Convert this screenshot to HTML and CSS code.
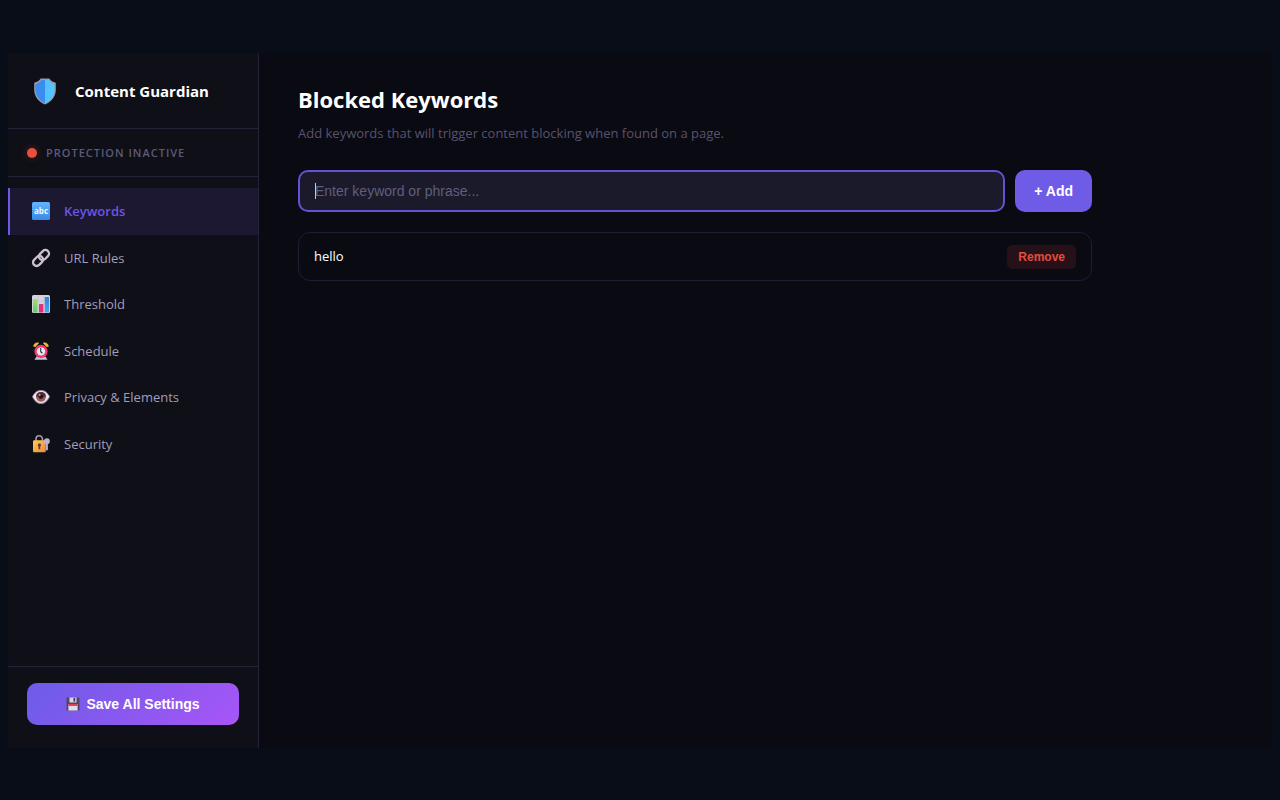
FILE: index.html
```html
<!DOCTYPE html>
<html lang="en">
<head>
<meta charset="utf-8">
<meta name="viewport" content="width=device-width, initial-scale=1">
<title>Content Guardian</title>
<link rel="stylesheet" href="styles.css">
</head>
<body>
<div class="app">
  <aside class="sidebar">
    <div class="brand">
      <svg class="brand-icon" viewBox="0 0 24 28" aria-hidden="true">
        <path d="M12 .5H7.500C6 3 4 4 .8 5v7.500C.8 19.500 6 25.500 12 27.500 18 25.500 23.200 19.500 23.200 12.500V5C20 4 18 3 16.500.500z" fill="#9a9aac"/>
        <path d="M12 2H8.300C6.800 4.200 5 5.400 2.200 6.200v6.300C2.200 18.700 6.800 24 12 26z" fill="#3b8cf0"/>
        <path d="M12 2h3.700c1.500 2.200 3.300 3.400 6.100 4.200v6.300C21.800 18.700 17.200 24 12 26z" fill="#53c4ff"/>
      </svg>
      <span class="brand-name">Content Guardian</span>
    </div>
    <div class="status"><span class="status-dot"></span><span>PROTECTION INACTIVE</span></div>
    <nav class="nav">
      <a class="nav-item active" href="#keywords" aria-current="page">
        <svg class="nav-icon" viewBox="0 0 18 18" aria-hidden="true">
          <defs><linearGradient id="abc" x1="0" y1="0" x2="0" y2="1"><stop offset="0" stop-color="#61b5fc"/><stop offset="1" stop-color="#3988e6"/></linearGradient></defs>
          <rect width="18" height="18" rx="1.500" fill="url(#abc)"/>
          <text x="9" y="11.500" text-anchor="middle" class="abc">abc</text>
        </svg>
        <span>Keywords</span>
      </a>
      <a class="nav-item" href="#url-rules">
        <svg class="nav-icon" viewBox="0 0 18 18" aria-hidden="true">
          <g fill="none" stroke="#cbbfd0" stroke-width="2.300" transform="rotate(-45 9 9)">
            <rect x="-.8" y="5.400" width="11.200" height="7.200" rx="3.600"/>
            <rect x="7.600" y="5.400" width="11.200" height="7.200" rx="3.600"/>
          </g>
        </svg>
        <span>URL Rules</span>
      </a>
      <a class="nav-item" href="#threshold">
        <svg class="nav-icon" viewBox="0 0 18 18" aria-hidden="true">
          <defs>
            <linearGradient id="bar1" x1="0" y1="0" x2="0" y2="1"><stop offset="0" stop-color="#a5dd60"/><stop offset="1" stop-color="#55cf69"/></linearGradient>
            <linearGradient id="bar3" x1="0" y1="0" x2="0" y2="1"><stop offset="0" stop-color="#2787cf"/><stop offset="1" stop-color="#48a5f4"/></linearGradient>
          </defs>
          <rect width="18" height="18" rx="1.500" fill="#d9d1df"/>
          <path d="M0 6h18M0 12h18M6 0v18M12 0v18" stroke="#bdb3c9" stroke-width=".5"/>
          <rect x="1" y="4" width="4.300" height="13.500" rx=".6" fill="url(#bar1)"/>
          <rect x="7" y="9" width="4.300" height="8.500" rx=".6" fill="#e62f76"/>
          <rect x="12.800" y="2" width="4.200" height="15.500" rx=".6" fill="url(#bar3)"/>
        </svg>
        <span>Threshold</span>
      </a>
      <a class="nav-item" href="#schedule">
        <svg class="nav-icon" viewBox="0 0 18 18" aria-hidden="true">
          <path d="M1.200 4.600C1.400 1.800 4.300-.4 7.100.900L3.400 4.900zM16.800 4.600C16.600 1.800 13.700-.4 10.900.900l3.700 4z" fill="#f3b838"/>
          <path d="M4.500 14.500h9l2 3.200H2.500z" fill="#cbbde0"/>
          <circle cx="9" cy="9.400" r="6.600" fill="#f03b68"/>
          <circle cx="9" cy="9.400" r="4.200" fill="#eee6f4"/>
          <path d="M8.700 6v3.700l1.700 1.600" fill="none" stroke="#48344f" stroke-width="1.200"/>
        </svg>
        <span>Schedule</span>
      </a>
      <a class="nav-item" href="#privacy">
        <svg class="nav-icon" viewBox="0 0 18 18" aria-hidden="true">
          <path d="M0 8.700C2.600 3.900 5.300 2 9 2s6.400 1.900 9 6.700C15.400 13.800 12.700 16 9 16S2.600 13.800 0 8.700z" fill="#94869c"/>
          <path d="M.8 8.600C3 4.800 5.700 3.100 9 3.100s6 1.700 8.200 5.500C15 12.900 12.300 15 9 15S3 12.900.8 8.600z" fill="#eee9f0"/>
          <circle cx="9" cy="8.800" r="4.900" fill="#9a5a54"/>
          <path d="M4.100 8.800a4.900 4.900 0 0 1 9.800 0z" fill="#5b2c38"/>
          <circle cx="9" cy="8.600" r="2.300" fill="#24161e"/>
          <circle cx="7.700" cy="7" r="1" fill="#baa1aa"/>
        </svg>
        <span>Privacy &amp; Elements</span>
      </a>
      <a class="nav-item" href="#security">
        <svg class="nav-icon" viewBox="0 0 18 18" aria-hidden="true">
          <defs><linearGradient id="lock" x1="0" y1="0" x2="1" y2="1"><stop offset="0" stop-color="#ffcb48"/><stop offset="1" stop-color="#ed8744"/></linearGradient></defs>
          <path d="M4 6.500V4a3.200 3.200 0 0 1 6.400 0v2.500" fill="none" stroke="#a29aaa" stroke-width="1.600"/>
          <rect x="1" y="5.300" width="12.800" height="12" rx="1.200" fill="url(#lock)"/>
          <path d="M7.400 8.600a1.600 1.600 0 0 1 .8 3v2.600H6.600v-2.600a1.600 1.600 0 0 1 .8-3z" fill="#503943"/>
          <circle cx="14.900" cy="6.200" r="2.900" fill="#bcb0cc"/>
          <path d="M14 8h1.900v6.500l-1 1.200-.9-1z" fill="#bcb0cc"/>
        </svg>
        <span>Security</span>
      </a>
    </nav>
    <div class="sidebar-foot">
      <button class="save" type="button">
        <svg class="save-icon" viewBox="0 0 14 14" aria-hidden="true">
          <path d="M1.200.5h11.600l.7.700v12.300H.5V1.200z" fill="#50466a"/>
          <rect x="3.500" y=".5" width="7" height="5" fill="#d9d5e4"/>
          <rect x="7.500" y="1" width="1.700" height="3.600" fill="#41365a"/>
          <rect x="2.400" y="7" width="9.200" height="6.500" fill="#e3dcea"/>
          <rect x="2.400" y="7" width="9.200" height="2" fill="#dc425e"/>
        </svg>
        <span>Save All Settings</span>
      </button>
    </div>
  </aside>
  <main class="main">
    <div class="content">
      <h1 class="title">Blocked Keywords</h1>
      <p class="subtitle">Add keywords that will trigger content blocking when found on a page.</p>
      <form class="add-form">
        <div class="field-wrap">
          <input class="field" type="text" placeholder="Enter keyword or phrase..." aria-label="Keyword or phrase">
        </div>
        <button class="add" type="button">+ Add</button>
      </form>
      <ul class="list">
        <li class="list-item"><span>hello</span><button class="remove" type="button">Remove</button></li>
      </ul>
    </div>
  </main>
</div>
</body>
</html>
```
FILE: styles.css
```css
* { box-sizing: border-box; }

body {
  margin: 0;
  min-height: 100vh;
  padding: 53px 8px 52px;
  display: flex;
  background: #080d18;
  color: #fff;
  font: 13px/1.5 "Open Sans", "Noto Sans", sans-serif;
}

button, input { font-family: "Liberation Sans", Arial, sans-serif; }
button { border: 0; font-weight: 700; cursor: pointer; }

.app { flex: 1; display: flex; background: #0a0a12; }

.sidebar {
  flex: 0 0 251px;
  display: flex;
  flex-direction: column;
  background: #0f0f17;
  border-right: 1px solid #252238;
}

.brand {
  display: flex;
  align-items: center;
  gap: 18px;
  padding: 25px 25px 23px;
  border-bottom: 1px solid #25223a;
}
.brand-icon { width: 24px; height: 27px; }
.brand-name { font-size: 15px; font-weight: 700; line-height: 27px; }

.status {
  display: flex;
  align-items: center;
  gap: 9px;
  padding: 15px 19px 14px;
  border-bottom: 1px solid #25223a;
  color: #5c5a78;
  font-size: 11px;
  line-height: 18px;
  font-weight: 600;
  letter-spacing: 1px;
}
.status-dot {
  width: 10px;
  height: 10px;
  border-radius: 50%;
  background: #e94f3d;
  box-shadow: 0 0 8px rgba(233, 79, 61, .3);
}

.nav { flex: 1; padding-top: 11px; }
.nav-item {
  display: flex;
  align-items: center;
  gap: 14px;
  padding: 12px 22px;
  border-left: 2px solid transparent;
  color: #a09dbd;
  font-size: 15px;
  line-height: 1.5em;
  text-decoration: none;
}
.nav-item span { font-size: 13px; }
.nav-item.active {
  border-left-color: #6e5ae6;
  background: #1c1832;
  color: #6c55e5;
  font-weight: 600;
}
.nav-icon { width: 18px; height: 18px; overflow: visible; }
.abc { fill: #eef6ff; font: 700 8px "Open Sans", sans-serif; }

.sidebar-foot { padding: 16px 19px 23px; border-top: 1px solid #25223a; }
.save {
  display: flex;
  align-items: center;
  justify-content: center;
  gap: 6px;
  width: 100%;
  padding: 12px;
  border-radius: 10px;
  background: linear-gradient(135deg, #6c5ce7, #a855f7);
  color: #fff;
  font-size: 14px;
  line-height: 18px;
}
.save-icon { width: 14px; height: 14px; }

.main { flex: 1; padding: 30px 39px; }
.content { max-width: 794px; }
.title { margin: 0; font-size: 22px; line-height: 33px; font-weight: 700; }
.subtitle { margin: 7px 0 26px; color: #56536f; line-height: 21px; }

.add-form { display: flex; gap: 10px; margin: 0 0 20px; }
.field-wrap { position: relative; flex: 1; display: flex; min-width: 0; }
.field {
  flex: 1;
  min-width: 0;
  padding: 10px 15px;
  border: 2px solid #6550d8;
  border-radius: 10px;
  outline: 0;
  background: #1a1a2b;
  color: #fff;
  font-size: 14px;
  line-height: 18px;
}
.field::placeholder { color: #605e7d; opacity: 1; }
/* text caret of the active field */
.field-wrap::before {
  content: "";
  position: absolute;
  top: 13px;
  bottom: 13px;
  left: 17px;
  width: 1px;
  background: #c9c8d6;
}
.add {
  padding: 12px 19px;
  border-radius: 10px;
  background: #6e5ce7;
  color: #fff;
  font-size: 14px;
  line-height: 18px;
}

.list { margin: 0; padding: 0; list-style: none; }
.list-item {
  display: flex;
  align-items: center;
  justify-content: space-between;
  padding: 12px 15px 11px;
  border: 1px solid #1f1d33;
  border-radius: 12px;
}
.remove {
  padding: 5px 11px;
  border-radius: 5px;
  background: #261118;
  color: #e64b3d;
  font-size: 12px;
  line-height: 14px;
}
```
